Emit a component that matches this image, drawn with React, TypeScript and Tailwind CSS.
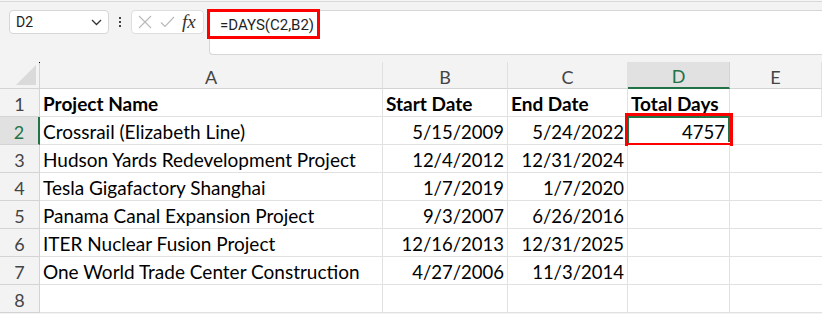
import React from "react";

const rows: [string, string, string, string][] = [
  ["Crossrail (Elizabeth Line)", "5/15/2009", "5/24/2022", "4757"],
  ["Hudson Yards Redevelopment Project", "12/4/2012", "12/31/2024", ""],
  ["Tesla Gigafactory Shanghai", "1/7/2019", "1/7/2020", ""],
  ["Panama Canal Expansion Project", "9/3/2007", "6/26/2016", ""],
  ["ITER Nuclear Fusion Project", "12/16/2013", "12/31/2025", ""],
  ["One World Trade Center Construction", "4/27/2006", "11/3/2014", ""],
];

const cellFont = { fontFamily: "Lato, 'Open Sans', sans-serif" };
const uiFont = { fontFamily: "Roboto, 'Open Sans', sans-serif" };

function RowHead({ n, sel }: { n: number; sel?: boolean }) {
  return sel ? (
    <div
      className="bg-[#e1e1e1] border-r-2 border-r-[#217346] border-b border-[#d4d4d4] flex items-center justify-center pt-[4px] text-[18px] text-[#217346]"
      style={cellFont}
    >
      {n}
    </div>
  ) : (
    <div
      className="bg-[#f3f3f3] border-r border-b border-[#d4d4d4] flex items-center justify-center pt-[4px] text-[18px] text-[#444]"
      style={cellFont}
    >
      {n}
    </div>
  );
}

export default function App() {
  return (
    <div className="w-[822px] h-[314px] overflow-hidden bg-[#f3f3f3] relative">
      {/* top strip */}
      <div className="h-[2px] bg-gradient-to-b from-white to-[#ececec] border-b border-[#d8d8d8]" />
      {/* formula row */}
      <div className="flex items-start pl-[9px] pt-[8px] h-[60px]">
        <div
          className="w-[100px] h-[24px] bg-white border border-[#d6d6d6] rounded-[4px] flex items-center justify-between pl-[6px] pr-[6px] text-[14px] text-[#222]"
          style={uiFont}
        >
          <span>D2</span>
          <svg width="11" height="7" viewBox="0 0 11 7">
            <path d="M1 1 L5.5 5.5 L10 1" fill="none" stroke="#333" strokeWidth="1.3" />
          </svg>
        </div>
        <div className="w-[22px] h-[24px] flex flex-col items-center justify-center gap-[2px]">
          <div className="w-[2px] h-[2px] bg-[#444]" />
          <div className="w-[2px] h-[2px] bg-[#444]" />
          <div className="w-[2px] h-[2px] bg-[#444]" />
        </div>
        <div className="w-[73px] h-[24px] bg-white border border-[#dedede] rounded-[4px] flex items-center pl-[6px] gap-[8px]">
          <svg width="14" height="14" viewBox="0 0 14 14">
            <path d="M1 1 L13 13 M13 1 L1 13" stroke="#b8b8b8" strokeWidth="1.1" fill="none" />
          </svg>
          <svg width="15" height="12" viewBox="0 0 15 12">
            <path d="M1 6.5 L5 10.5 L14 1" stroke="#b8b8b8" strokeWidth="1.1" fill="none" />
          </svg>
          <span
            className="italic text-[19px] text-[#333] leading-none -ml-[1px] -mt-[2px]"
            style={{ fontFamily: "'Liberation Serif', 'DejaVu Serif', serif" }}
          >
            fx
          </span>
        </div>
        <div className="ml-[5px] flex-1 h-[45px] bg-white border border-[#d6d6d6] rounded-l-[4px] border-r-0 relative">
          <div
            className="pl-[10px] pt-[3px] text-[15px] text-[#1f1f1f]"
            style={uiFont}
          >
            =DAYS(C2,B2)
          </div>
          <div className="absolute left-[-3px] top-[-2px] w-[113px] h-[30px] border-[3px] border-[#ff0000]" />
        </div>
      </div>

      {/* grid */}
      <div className="relative">
        <div className="absolute left-[39px] top-0 w-[1px] h-[1px] bg-black" />
        <div
          className="grid"
          style={{
            gridTemplateColumns: "40px 343px 125px 120px 102px 92px",
            gridTemplateRows: "27px repeat(8, 28px)",
          }}
        >
          {/* header row */}
          <div className="bg-[#f3f3f3] border-r border-b border-[#d4d4d4] flex items-end justify-end pr-[3px] pb-[3px]">
            <svg width="20" height="20" viewBox="0 0 20 20">
              <path d="M20 0 L20 20 L0 20 Z" fill="#dadada" />
            </svg>
          </div>
          {["A", "B", "C", "D", "E"].map((l) =>
            l === "D" ? (
              <div
                key={l}
                className="bg-[#e1e1e1] border-r border-[#d4d4d4] border-b-2 border-b-[#217346] flex items-center justify-center pt-[4px] text-[18px] text-[#217346]"
                style={cellFont}
              >
                {l}
              </div>
            ) : (
              <div
                key={l}
                className="bg-[#f3f3f3] border-r border-r-[#e0e0e0] border-b border-b-[#d4d4d4] flex items-center justify-center pt-[4px] text-[18px] text-[#444]"
                style={cellFont}
              >
                {l}
              </div>
            )
          )}

          {/* row 1 */}
          <RowHead n={1} />
          {["Project Name", "Start Date", "End Date", "Total Days", ""].map((t, i) => (
            <div
              key={i}
              className="bg-white border-r border-b border-[#e1e1e1] flex items-center pl-[3px] pt-[4px] text-[19px] font-bold text-black whitespace-nowrap"
              style={cellFont}
            >
              {t}
            </div>
          ))}

          {rows.map((r, ri) => {
            const n = ri + 2;
            const sel = n === 2;
            return (
              <React.Fragment key={n}>
                <RowHead n={n} sel={sel} />
                <div
                  className="bg-white border-r border-b border-[#e1e1e1] flex items-center pl-[3px] pt-[4px] text-[19px] text-black whitespace-nowrap"
                  style={cellFont}
                >
                  {r[0]}
                </div>
                <div
                  className="bg-white border-r border-b border-[#e1e1e1] flex items-center justify-end pr-[3px] pt-[4px] text-[18.5px] text-black"
                  style={cellFont}
                >
                  {r[1]}
                </div>
                <div
                  className="bg-white border-r border-b border-[#e1e1e1] flex items-center justify-end pr-[3px] pt-[4px] text-[18.5px] text-black"
                  style={cellFont}
                >
                  {r[2]}
                </div>
                <div
                  className="bg-white border-r border-b border-[#e1e1e1] flex items-center justify-end pr-[4px] pt-[4px] text-[18.5px] text-black relative"
                  style={cellFont}
                >
                  {r[3]}
                  {sel && (
                    <>
                      <div className="absolute left-[-1px] top-[-1px] right-[-1px] bottom-[-1px] border-2 border-[#217346]" />
                      <div className="absolute right-[-3px] bottom-[-3px] w-[5px] h-[5px] bg-[#217346] border border-white" />
                      <div className="absolute left-[-3px] top-[-4px] right-[-4px] bottom-[-2px] border-[3px] border-[#ff0000]" />
                    </>
                  )}
                </div>
                <div className="bg-white border-b border-[#e1e1e1]" />
              </React.Fragment>
            );
          })}

          {/* row 8 */}
          <RowHead n={8} />
          <div className="bg-white border-r border-b border-[#e1e1e1]" />
          <div className="bg-white border-r border-b border-[#e1e1e1]" />
          <div className="bg-white border-r border-b border-[#e1e1e1]" />
          <div className="bg-white border-r border-b border-[#e1e1e1]" />
          <div className="bg-white border-b border-[#e1e1e1]" />
        </div>
      </div>
    </div>
  );
}
